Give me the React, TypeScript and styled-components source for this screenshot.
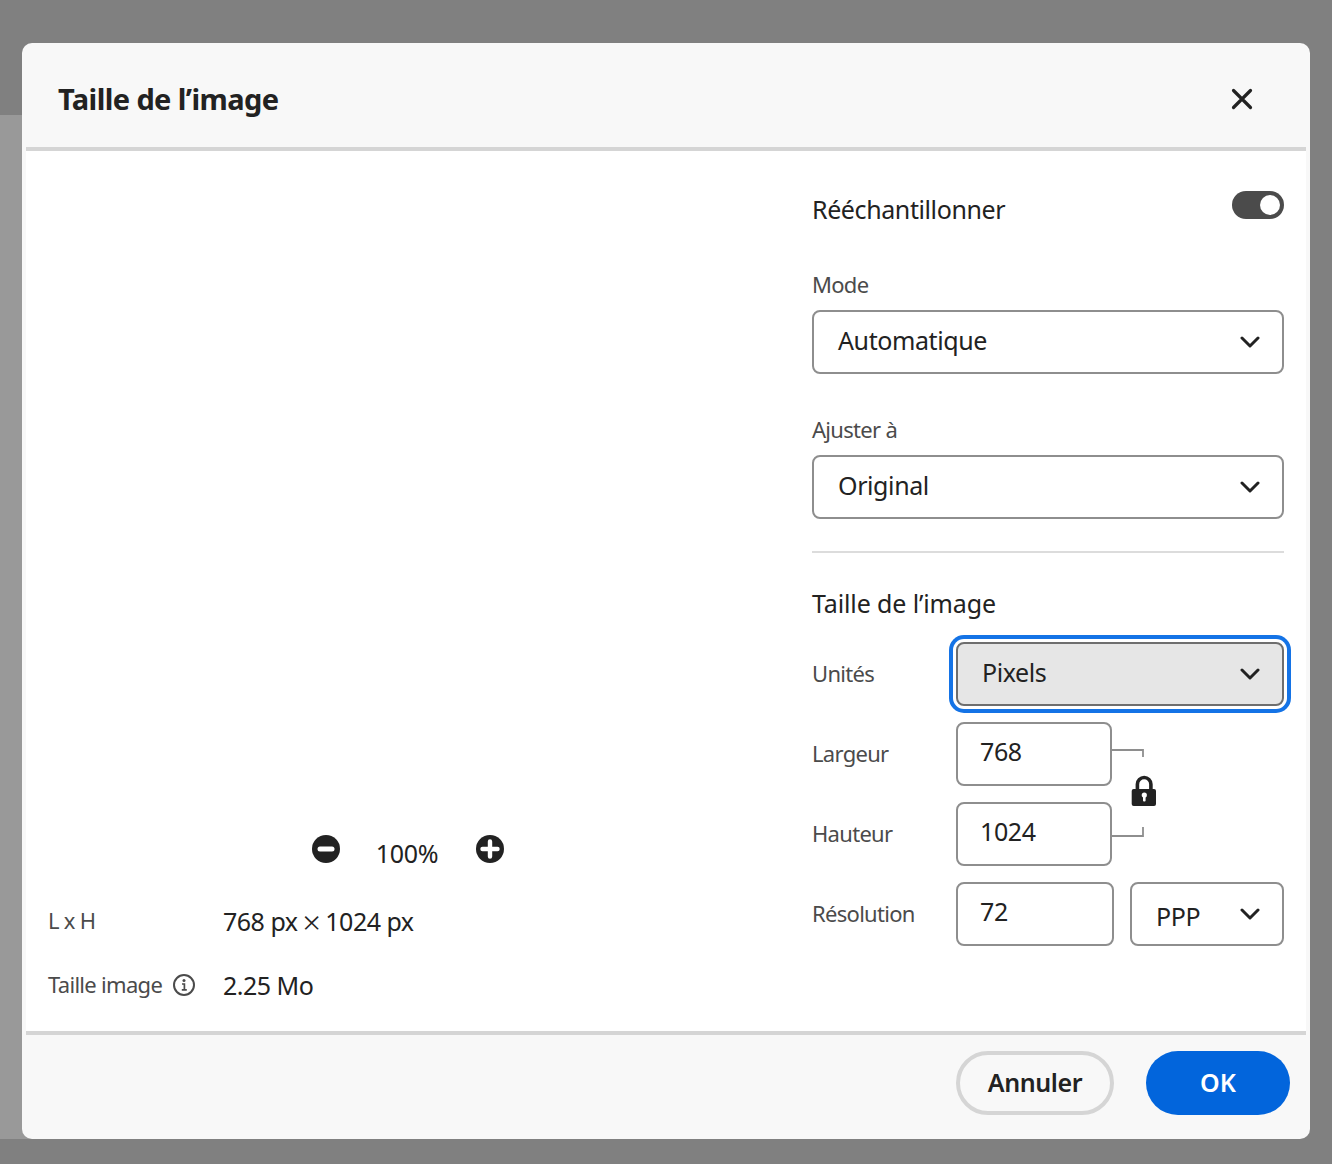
import React from "react";
import styled, { createGlobalStyle } from "styled-components";

const Global = createGlobalStyle`
  html, body { margin: 0; padding: 0; background: #808080; }
  * { box-sizing: border-box; }
  body { font-family: "Noto Sans", "Open Sans", sans-serif; color: #222; }
`;

const Page = styled.div`
  position: relative;
  width: 1332px;
  height: 1164px;
  padding: 43px 22px 25px;
  background: #808080;
`;
const BackPanel = styled.div`
  position: absolute;
  left: 0;
  top: 115px;
  width: 40px;
  height: 1024px;
  background: #999;
`;
const Dialog = styled.div`
  position: relative;
  height: 1096px;
  display: flex;
  flex-direction: column;
  background: #f8f8f8;
  border-radius: 10px;
  padding: 0 4px;
`;
const Header = styled.header`
  height: 108px;
  flex: none;
  display: flex;
  align-items: center;
  justify-content: space-between;
  padding: 0 53px 0 32px;
  border-bottom: 4px solid #d5d5d5;
`;
const Title = styled.h1`
  margin: 8px 0 0;
  font-size: 29px;
  font-weight: 700;
  letter-spacing: -0.6px;
  line-height: 40px;
  color: #222;
`;
const CloseButton = styled.button`
  display: flex;
  padding: 0;
  margin-top: 8px;
  border: 0;
  background: none;
  color: #222;
`;
const Body = styled.main`
  flex: 1;
  display: flex;
  gap: 22px;
  padding-right: 22px;
  background: #fff;
`;
const PreviewColumn = styled.section`
  width: 764px;
  flex: none;
  display: flex;
  flex-direction: column;
  justify-content: flex-end;
  padding: 0 22px 28px;
`;
const ZoomRow = styled.div`
  display: flex;
  align-items: flex-start;
  justify-content: center;
  gap: 37px;
  margin-bottom: 33px;
`;
const ZoomValue = styled.span`
  font-size: 25px;
  line-height: 34px;
  letter-spacing: -0.3px;
  margin: 1px 1px 0 -1px;
`;
const ZoomIcon = styled.svg`
  width: 28px;
  height: 28px;
  display: block;
`;
const InfoRow = styled.div`
  display: grid;
  grid-template-columns: 175px 1fr;
  align-items: center;
  height: 36px;
  & + & { margin-top: 28px; }
`;
const InfoLabel = styled.span`
  display: flex;
  align-items: center;
  gap: 11px;
  padding-bottom: 2px;
  font-size: 22px;
  letter-spacing: -0.7px;
  color: #4b4b4b;
`;
const InfoIcon = styled.svg`
  width: 22px;
  height: 22px;
  margin-top: 2px;
  display: block;
`;
const InfoValue = styled.span`
  font-size: 25px;
  letter-spacing: -0.5px;
  color: #222;
`;
const TimesSign = styled.span`
  font-size: 32px;
  line-height: 0;
  margin: 0 -1px;
  vertical-align: -3px;
  font-weight: 300;
`;
const SettingsColumn = styled.section`
  flex: 1;
  display: flex;
  flex-direction: column;
  padding-top: 40px;
`;
const ToggleRow = styled.div`
  display: flex;
  justify-content: space-between;
  align-items: flex-start;
  height: 36px;
  margin-bottom: 41px;
`;
const ToggleLabel = styled.span`
  font-size: 25px;
  line-height: 36px;
  letter-spacing: -0.4px;
`;
const Toggle = styled.span`
  display: flex;
  justify-content: flex-end;
  align-items: center;
  width: 52px;
  height: 28px;
  padding-right: 4px;
  border-radius: 14px;
  background: #4b4b4b;
  &::after {
    content: "";
    width: 20px;
    height: 20px;
    border-radius: 50%;
    background: #fff;
  }
`;
const FieldLabel = styled.div`
  font-size: 22px;
  line-height: 32px;
  letter-spacing: -0.7px;
  color: #4b4b4b;
  margin-bottom: 10px;
`;
const Select = styled.div<{ $active?: boolean }>`
  height: 64px;
  display: flex;
  align-items: center;
  justify-content: space-between;
  padding: 0 22px 0 24px;
  border: 2px solid ${(p) => (p.$active ? "#6e6e6e" : "#8e8e8e")};
  border-radius: 8px;
  background: ${(p) => (p.$active ? "#e6e6e6" : "#fff")};
  box-shadow: ${(p) => (p.$active ? "0 0 0 3px #fff, 0 0 0 7px #1473e6" : "none")};
  font-size: 25px;
  letter-spacing: -0.4px;
  color: #222;
`;
const SelectText = styled.span<{ $low?: boolean }>`
  margin: ${(p) => (p.$low ? "4px 0 0" : "0 0 4px")};
`;
const Stack = styled.div`
  margin-bottom: 39px;
`;
const Rule = styled.hr`
  width: 100%;
  height: 2px;
  margin: -7px 0 32px;
  border: 0;
  background: #dcdcdc;
`;
const SectionTitle = styled.h2`
  margin: 0 0 21px;
  font-size: 25px;
  line-height: 36px;
  font-weight: 400;
  letter-spacing: -0.12px;
  color: #222;
`;
const SizeGrid = styled.div`
  display: grid;
  grid-template-columns: 144px 156px 1fr;
  grid-auto-rows: 64px;
  row-gap: 16px;
  align-items: center;
`;
const WideCell = styled.div`
  grid-column: 2 / 4;
`;
const ResolutionCell = styled.div`
  grid-column: 2 / 4;
  display: grid;
  grid-template-columns: 158px 154px;
  gap: 16px;
`;
const NumberBox = styled.div`
  height: 64px;
  padding: 7px 22px 0;
  border: 2px solid #8e8e8e;
  border-radius: 8px;
  background: #fff;
  font-size: 25px;
  line-height: 40px;
  letter-spacing: -0.4px;
  color: #222;
`;
const LinkCell = styled.div`
  grid-column: 3;
  grid-row: 2 / 4;
  align-self: start;
  height: 144px;
`;
const LinkDrawing = styled.svg`
  display: block;
`;
const GridLabel = styled.span`
  padding-bottom: 2px;
  font-size: 22px;
  letter-spacing: -0.7px;
  color: #4b4b4b;
`;
const Footer = styled.footer`
  height: 108px;
  flex: none;
  display: flex;
  align-items: flex-start;
  justify-content: flex-end;
  gap: 32px;
  padding: 16px 16px 0 0;
  border-top: 4px solid #d5d5d5;
`;
const SecondaryButton = styled.button`
  width: 158px;
  height: 64px;
  padding: 0 0 3px;
  border: 4px solid #d5d5d5;
  border-radius: 32px;
  background: transparent;
  font: 600 25px "Noto Sans", sans-serif;
  letter-spacing: -0.4px;
  color: #222;
`;
const PrimaryButton = styled.button`
  width: 144px;
  height: 64px;
  padding: 0 0 3px;
  border: 0;
  border-radius: 32px;
  background: #0265dc;
  font: 600 25px "Noto Sans", sans-serif;
  color: #fff;
`;

const Chevron = () => (
  <svg width="20" height="12" viewBox="0 0 20 12" fill="none" stroke="#222" strokeWidth="3" strokeLinecap="round" strokeLinejoin="round">
    <path d="M2 2l8 8 8-8" />
  </svg>
);

export default function App() {
  return (
    <Page>
      <Global />
      <BackPanel />
      <Dialog>
        <Header>
          <Title>Taille de l’image</Title>
          <CloseButton aria-label="Fermer">
            <svg width="22" height="22" viewBox="0 0 22 22" fill="none" stroke="currentColor" strokeWidth="3.2" strokeLinecap="round">
              <path d="M2.5 2.5l17 17M19.5 2.5l-17 17" />
            </svg>
          </CloseButton>
        </Header>
        <Body>
          <PreviewColumn>
            <ZoomRow>
              <ZoomIcon viewBox="0 0 28 28">
                <circle cx="14" cy="14" r="14" fill="#222" />
                <rect x="5.5" y="11.5" width="17" height="5" rx="2.5" fill="#fff" />
              </ZoomIcon>
              <ZoomValue>100%</ZoomValue>
              <ZoomIcon viewBox="0 0 28 28">
                <circle cx="14" cy="14" r="14" fill="#222" />
                <path d="M14 6.5v15M6.5 14h15" stroke="#fff" strokeWidth="4.4" strokeLinecap="round" />
              </ZoomIcon>
            </ZoomRow>
            <InfoRow>
              <InfoLabel>L x H</InfoLabel>
              <InfoValue>
                768 px <TimesSign>×</TimesSign> 1024 px
              </InfoValue>
            </InfoRow>
            <InfoRow>
              <InfoLabel>
                Taille image
                <InfoIcon viewBox="0 0 22 22" fill="none">
                  <circle cx="11" cy="11" r="10" stroke="#4b4b4b" strokeWidth="2" />
                  <circle cx="11" cy="6.5" r="1.5" fill="#4b4b4b" />
                  <path d="M9 10h2.4v5.6M8.8 15.8h5" stroke="#4b4b4b" strokeWidth="1.7" />
                </InfoIcon>
              </InfoLabel>
              <InfoValue>2.25 Mo</InfoValue>
            </InfoRow>
          </PreviewColumn>
          <SettingsColumn>
            <ToggleRow>
              <ToggleLabel>Rééchantillonner</ToggleLabel>
              <Toggle />
            </ToggleRow>
            <Stack>
              <FieldLabel>Mode</FieldLabel>
              <Select>
                <SelectText>Automatique</SelectText>
                <Chevron />
              </Select>
            </Stack>
            <Stack>
              <FieldLabel>Ajuster à</FieldLabel>
              <Select>
                <SelectText>Original</SelectText>
                <Chevron />
              </Select>
            </Stack>
            <Rule />
            <SectionTitle>Taille de l’image</SectionTitle>
            <SizeGrid>
              <GridLabel>Unités</GridLabel>
              <WideCell>
                <Select $active>
                  <SelectText>Pixels</SelectText>
                  <Chevron />
                </Select>
              </WideCell>
              <GridLabel>Largeur</GridLabel>
              <NumberBox>768</NumberBox>
              <LinkCell>
                <LinkDrawing width="48" height="144" viewBox="0 0 48 144" fill="none">
                  <path d="M0 28h31v7M0 114h31v-9" stroke="#8e8e8e" strokeWidth="1.8" />
                  <path d="M25.4 68v-5.7a6.75 6.75 0 0 1 13.5 0V68" stroke="#222" strokeWidth="3.6" />
                  <rect x="19.7" y="67" width="24.3" height="17" rx="2" fill="#222" />
                  <circle cx="32.3" cy="73" r="2.6" fill="#fff" />
                  <rect x="31" y="73" width="2.6" height="6.6" rx="1" fill="#fff" />
                </LinkDrawing>
              </LinkCell>
              <GridLabel>Hauteur</GridLabel>
              <NumberBox>1024</NumberBox>
              <GridLabel>Résolution</GridLabel>
              <ResolutionCell>
                <NumberBox>72</NumberBox>
                <Select>
                  <SelectText $low>PPP</SelectText>
                  <Chevron />
                </Select>
              </ResolutionCell>
            </SizeGrid>
          </SettingsColumn>
        </Body>
        <Footer>
          <SecondaryButton>Annuler</SecondaryButton>
          <PrimaryButton>OK</PrimaryButton>
        </Footer>
      </Dialog>
    </Page>
  );
}
